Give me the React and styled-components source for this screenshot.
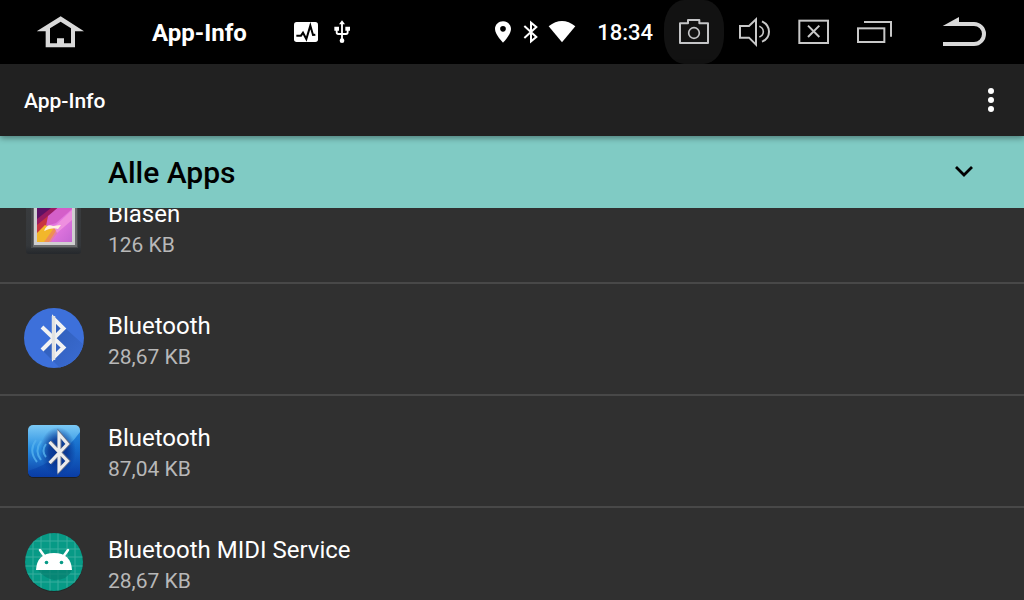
import React, { useLayoutEffect, useRef } from "react";
import styled, { createGlobalStyle } from "styled-components";

const GlobalStyle = createGlobalStyle`
  *, *::before, *::after { box-sizing: border-box; }
  html { background: #303030; }
  body { margin: 0; font-family: Roboto, sans-serif; color: #fff; }
  svg { display: block; flex: none; }
`;

const Screen = styled.div`
  display: flex;
  flex-direction: column;
  height: 100vh;
  background: #303030;
`;

const StatusBar = styled.header`
  display: flex;
  flex: none;
  align-items: stretch;
  height: 64px;
  background: #000;
`;

const BarButton = styled.button`
  display: flex;
  flex: none;
  align-items: center;
  justify-content: center;
  width: ${(p) => (p.$wide ? 120 : 60)}px;
  padding: 0;
  border: 0;
  border-radius: ${(p) => (p.$active ? "20px / 28px" : "0")};
  background: ${(p) => (p.$active ? "#121212" : "transparent")};
  color: ${(p) => (p.$wide ? "#d9d9d9" : "#c8c8c8")};
`;

const StatusTitle = styled.span`
  align-self: center;
  margin: 0 47px 0 32px;
  font-size: 24px;
  font-weight: 700;
  line-height: 34px;
  padding-top: 2px;
  white-space: nowrap;
`;

const StatusIcons = styled.div`
  display: flex;
  align-items: center;
  gap: ${(p) => p.$gap}px;
`;

const Spacer = styled.div`
  flex: 1;
`;

const Clock = styled.time`
  align-self: center;
  margin: 0 11px 0 20px;
  padding-top: 2px;
  font-size: 22px;
  font-weight: 500;
  line-height: 34px;
`;

const ActionBar = styled.div`
  position: relative;
  z-index: 1;
  display: flex;
  flex: none;
  align-items: stretch;
  justify-content: space-between;
  height: 72px;
  padding-left: 24px;
  background: #212121;
  box-shadow: 0 2px 6px rgba(0, 0, 0, 0.4);
`;

const ActionTitle = styled.h1`
  align-self: center;
  margin: 0;
  padding-top: 2px;
  font-size: 21px;
  font-weight: 500;
  line-height: 32px;
`;

const MenuButton = styled.button`
  display: flex;
  align-items: center;
  justify-content: center;
  width: 66px;
  padding: 0;
  border: 0;
  background: transparent;
  color: #fff;
`;

const Filter = styled.div`
  display: grid;
  flex: none;
  height: 72px;
  align-items: center;
  background: #80cbc4;
  color: #000;

  > * { grid-area: 1 / 1; }
  > svg { justify-self: end; margin-right: 48px; pointer-events: none; }
`;

const FilterSelect = styled.select`
  width: 100%;
  height: 72px;
  padding: 0 108px;
  border: 0;
  border-radius: 0;
  outline: 0;
  appearance: none;
  background: transparent;
  color: #000;
  font: 500 30px Roboto, sans-serif;
`;

const AppList = styled.ul`
  flex: 1;
  min-height: 0;
  margin: 0;
  padding: 0;
  overflow-y: auto;
  scrollbar-width: none;
  list-style: none;
`;

const AppRow = styled.li`
  display: flex;
  gap: 24px;
  height: 112px;
  padding: 24px 24px 0;
  border-bottom: 2px solid #484848;
`;

const AppText = styled.div`
  display: flex;
  flex-direction: column;
  min-width: 0;
  padding-top: 2px;
  line-height: 32px;
`;

const AppName = styled.span`
  font-size: 24px;
`;

const AppSize = styled.span`
  font-size: 21px;
  line-height: 30px;
  color: #b8b8b8;
`;

const HomeIcon = () => (
  <svg width="48" height="32" viewBox="48 47 144 96" fill="currentColor" fillRule="evenodd">
    <path d="M122 48L192 93H165V141H77V93H50ZM122 64L90 84V129H111V114H132V129H153V84Z" />
  </svg>
);

const ActivityIcon = () => (
  <svg width="24" height="24" viewBox="822 60 72 72">
    <rect x="822" y="66" width="72" height="60" rx="8" fill="#fff" />
    <path d="M829 107H843L849 98L859 117L871 77L879 105L886 104" fill="none" stroke="#000" strokeWidth="6" />
  </svg>
);

const UsbIcon = () => (
  <svg width="24" height="24" viewBox="930 60 72 72" fill="#fff">
    <path d="M966 61L975 73H957ZM943 80H957V92H943ZM976 80H990V92H976Z" />
    <circle cx="966" cy="122" r="7" />
    <path d="M966 70V122M950 90V97Q950 102 955 102H978Q983 102 983 97V90" fill="none" stroke="#fff" strokeWidth="5.500" />
  </svg>
);

const PinIcon = () => (
  <svg width="24" height="24" viewBox="33 60 72 72" fill="#fff" fillRule="evenodd">
    <path d="M69 64C56 64 45 74 45 87C45 104 69 128 69 128S93 104 93 87C93 74 82 64 69 64ZM69 78A8.500 8.500 0 1 1 69 95A8.500 8.500 0 1 1 69 78Z" />
  </svg>
);

const BluetoothStatusIcon = () => (
  <svg width="24" height="24" viewBox="117 60 72 72" fill="none" stroke="#fff" strokeWidth="6">
    <path d="M133 78L169 111L153 124V68L169 81L133 114" />
  </svg>
);

const WifiIcon = () => (
  <svg width="30" height="24" viewBox="201 60 90 72" fill="#fff">
    <path d="M206 79Q246 47 286 79L246 127Z" />
  </svg>
);

const CameraIcon = () => (
  <svg width="32" height="32" viewBox="594 48 96 96" fill="none" stroke="#c4c5c7" strokeWidth="6">
    <path d="M600 70H624V60H658V70H684V129H600Z" strokeLinejoin="round" />
    <circle cx="642" cy="99" r="16" strokeWidth="5" />
  </svg>
);

const VolumeIcon = () => (
  <svg width="32" height="32" viewBox="42 48 96 96" fill="none" stroke="currentColor" strokeWidth="6">
    <path d="M48 78H75L96 58V134L75 113H48Z" />
    <path d="M106 79Q118 84 118 95Q118 106 106 111" strokeWidth="5" />
    <path d="M114 64Q135 74 135 95Q135 116 114 125" />
  </svg>
);

const CloseIcon = () => (
  <svg width="32" height="32" viewBox="222 48 96 96" fill="none" stroke="currentColor" strokeWidth="6">
    <rect x="226" y="62" width="86" height="67" />
    <path d="M252 77L286 111M286 77L252 111" />
  </svg>
);

const RecentsIcon = () => (
  <svg width="36" height="32" viewBox="396 48 108 96" fill="none" stroke="currentColor" strokeWidth="6">
    <rect x="402" y="85" width="79" height="41" />
    <path d="M420 66H501V110" />
  </svg>
);

const BackIcon = () => (
  <svg width="44" height="32" viewBox="654 48 132 96">
    <path d="M656 78L705 51V78Z" fill="currentColor" />
    <path d="M700 72H750A30 30 0 0 1 750 132H657" fill="none" stroke="currentColor" strokeWidth="12" />
  </svg>
);

const MoreIcon = () => (
  <svg width="24" height="24" viewBox="0 0 24 24" fill="currentColor">
    <circle cx="12" cy="3" r="3" />
    <circle cx="12" cy="12" r="3" />
    <circle cx="12" cy="21" r="3" />
  </svg>
);

const ChevronIcon = () => (
  <svg width="24" height="24" viewBox="0 0 24 24" fill="none" stroke="#000" strokeWidth="2.800">
    <path d="M4 7L12 15L20 7" />
  </svg>
);

const BubblesIcon = () => (
  <svg width="60" height="60" viewBox="0 0 60 60">
    <defs>
      <linearGradient id="frame" x1="0" y1="0" x2="0" y2="1">
        <stop offset="0" stopColor="#3a3c3e" />
        <stop offset="0.85" stopColor="#34373a" />
        <stop offset="1" stopColor="#25282c" />
      </linearGradient>
      <linearGradient id="photo" x1="0" y1="0" x2="1" y2="1">
        <stop offset="0" stopColor="#d96bd8" />
        <stop offset="0.6" stopColor="#e376df" />
        <stop offset="1" stopColor="#c566d2" />
      </linearGradient>
      <clipPath id="photoClip"><rect x="13" y="4" width="35" height="42" /></clipPath>
    </defs>
    <rect x="2" y="2" width="55" height="56" rx="3" fill="url(#frame)" />
    <rect x="7" y="3" width="47" height="49" fill="#47494b" />
    <rect x="9" y="3" width="44" height="48" fill="#6a6b6d" />
    <rect x="10" y="3" width="41" height="46" fill="#d0cfd0" />
    <g clipPath="url(#photoClip)">
      <rect x="13" y="4" width="35" height="42" fill="url(#photo)" />
      <path d="M13 4H40L33 12L22 22L13 28Z" fill="#5c1164" />
      <path d="M13 23L27 12H34L23 27L13 36Z" fill="#9a1b62" />
      <path d="M13 29L24 20L23 31L13 40Z" fill="#c93540" />
      <path d="M24 20L37 9L48 4V13L32 27L22 30Z" fill="#d45fc9" />
      <path d="M13 37L21 29L30 33L22 46H13Z" fill="#f2b72b" />
      <path d="M22 46L31 33L36 33L27 46Z" fill="#e57da6" />
      <path d="M20 46L30 32L33 33L25 46Z" fill="#ee8f55" />
      <path d="M30 31L48 14V24L33 37Z" fill="#ee8fdf" />
      <path d="M20 35Q23 27 29 30L37 29L34 33Q28 31 20 35Z" fill="#fff0df" />
    </g>
  </svg>
);

const BluetoothRoundIcon = () => (
  <svg width="60" height="60" viewBox="0 0 60 60">
    <defs>
      <clipPath id="disc"><circle cx="30" cy="30" r="30" /></clipPath>
      <linearGradient id="shade" x1="0" y1="0" x2="1" y2="1">
        <stop offset="0.3" stopColor="#3160bd" />
        <stop offset="1" stopColor="#3b6cd3" />
      </linearGradient>
    </defs>
    <g clipPath="url(#disc)">
      <rect width="60" height="60" fill="#3d70da" />
      <path d="M41 20L60 37V60H36L18 42L30 30V8Z" fill="url(#shade)" />
    </g>
    <path d="M18 19L39.500 39.500L30 49V11L39.500 20.500L18 42" fill="none" stroke="#f2f2f2" strokeWidth="4" />
    <path d="M29.500 8V52" stroke="#e2e2e2" strokeWidth="3.500" />
  </svg>
);

const BluetoothTileIcon = () => (
  <svg width="60" height="60" viewBox="0 0 60 60">
    <defs>
      <linearGradient id="tile" x1="0" y1="0" x2="0" y2="1">
        <stop offset="0" stopColor="#7cc9f5" />
        <stop offset="0.45" stopColor="#2a90e2" />
        <stop offset="1" stopColor="#0a3da6" />
      </linearGradient>
      <linearGradient id="tileShade" x1="0" y1="0" x2="0" y2="1">
        <stop offset="0" stopColor="#1476d4" />
        <stop offset="1" stopColor="#0a3ca4" />
      </linearGradient>
      <radialGradient id="glow">
        <stop offset="0" stopColor="#07308c" />
        <stop offset="0.5" stopColor="#07308c" stopOpacity="0.8" />
        <stop offset="1" stopColor="#07308c" stopOpacity="0" />
      </radialGradient>
    </defs>
    <rect x="4" y="7" width="52" height="51" rx="5" fill="#1c1f25" />
    <rect x="4" y="5" width="52" height="52" rx="5" fill="url(#tile)" />
    <path d="M56 12V52Q56 57 51 57H9Q5 57 4 51Q34 42 56 12Z" fill="url(#tileShade)" opacity="0.8" />
    <ellipse cx="34" cy="31" rx="18" ry="24" fill="url(#glow)" />
    <g fill="none" stroke="#55b2ee" strokeWidth="2" opacity="0.8">
      <path d="M22 24Q17 31 22 37" />
      <path d="M17 21Q10 31 17 40" />
      <path d="M12 20Q4 31 13 42" />
    </g>
    <path d="M26 22L44 41L35.500 50V14L44 24L26 43" fill="none" stroke="#66728c" strokeWidth="4" />
    <path d="M25.500 22L43.500 41L35 50V14L43.500 24L25.500 43" fill="none" stroke="#ececec" strokeWidth="3" />
  </svg>
);

const AndroidIcon = () => (
  <svg width="60" height="60" viewBox="0 0 60 60">
    <defs>
      <clipPath id="android"><circle cx="30" cy="30" r="29" /></clipPath>
    </defs>
    <circle cx="30" cy="31" r="29" fill="#222827" />
    <g clipPath="url(#android)">
      <rect width="60" height="60" fill="#089a86" />
      <path d="M9 0V60M17 0V60M26 0V60M34 0V60M43 0V60M51 0V60M0 9H60M0 17H60M0 25H60M0 34H60M0 42H60M0 50H60" stroke="#45b3a4" strokeWidth="1" opacity="0.8" />
      <path d="M14 38H48Q44 48 30 48Q20 46 14 38Z" fill="#067e6e" opacity="0.7" />
    </g>
    <path d="M12 38Q13 21 30 21T48 38Z" fill="#fff" />
    <path d="M16 18L21 25M44 18L39 25" stroke="#fff" strokeWidth="2.500" strokeLinecap="round" />
    <circle cx="22.500" cy="30.500" r="1.800" fill="#089a86" />
    <circle cx="37.500" cy="30.500" r="1.800" fill="#089a86" />
  </svg>
);

const apps = [
  { id: "bubbles", name: "Blasen", size: "126 KB", Icon: BubblesIcon },
  { id: "bluetooth", name: "Bluetooth", size: "28,67 KB", Icon: BluetoothRoundIcon },
  { id: "bluetooth-car", name: "Bluetooth", size: "87,04 KB", Icon: BluetoothTileIcon },
  { id: "midi", name: "Bluetooth MIDI Service", size: "28,67 KB", Icon: AndroidIcon },
];

const INITIAL_SCROLL = 36;

export default function App() {
  const listRef = useRef(null);

  useLayoutEffect(() => {
    listRef.current.scrollTop = INITIAL_SCROLL;
  }, []);

  return (
    <>
      <GlobalStyle />
      <Screen>
        <StatusBar>
          <BarButton $wide aria-label="Startseite"><HomeIcon /></BarButton>
          <StatusTitle>App-Info</StatusTitle>
          <StatusIcons $gap={12}>
            <ActivityIcon />
            <UsbIcon />
          </StatusIcons>
          <Spacer />
          <StatusIcons $gap={4}>
            <PinIcon />
            <BluetoothStatusIcon />
            <WifiIcon />
          </StatusIcons>
          <Clock>18:34</Clock>
          <BarButton $active aria-label="Kamera"><CameraIcon /></BarButton>
          <BarButton aria-label="Lautstärke"><VolumeIcon /></BarButton>
          <BarButton aria-label="Schließen"><CloseIcon /></BarButton>
          <BarButton aria-label="Letzte Apps"><RecentsIcon /></BarButton>
          <BarButton $wide aria-label="Zurück"><BackIcon /></BarButton>
        </StatusBar>
        <ActionBar>
          <ActionTitle>App-Info</ActionTitle>
          <MenuButton aria-label="Weitere Optionen"><MoreIcon /></MenuButton>
        </ActionBar>
        <Filter>
          <FilterSelect aria-label="Apps filtern" defaultValue="all">
            <option value="all">Alle Apps</option>
          </FilterSelect>
          <ChevronIcon />
        </Filter>
        <AppList ref={listRef}>
          {apps.map(({ id, name, size, Icon }) => (
            <AppRow key={id}>
              <Icon />
              <AppText>
                <AppName>{name}</AppName>
                <AppSize>{size}</AppSize>
              </AppText>
            </AppRow>
          ))}
        </AppList>
      </Screen>
    </>
  );
}
